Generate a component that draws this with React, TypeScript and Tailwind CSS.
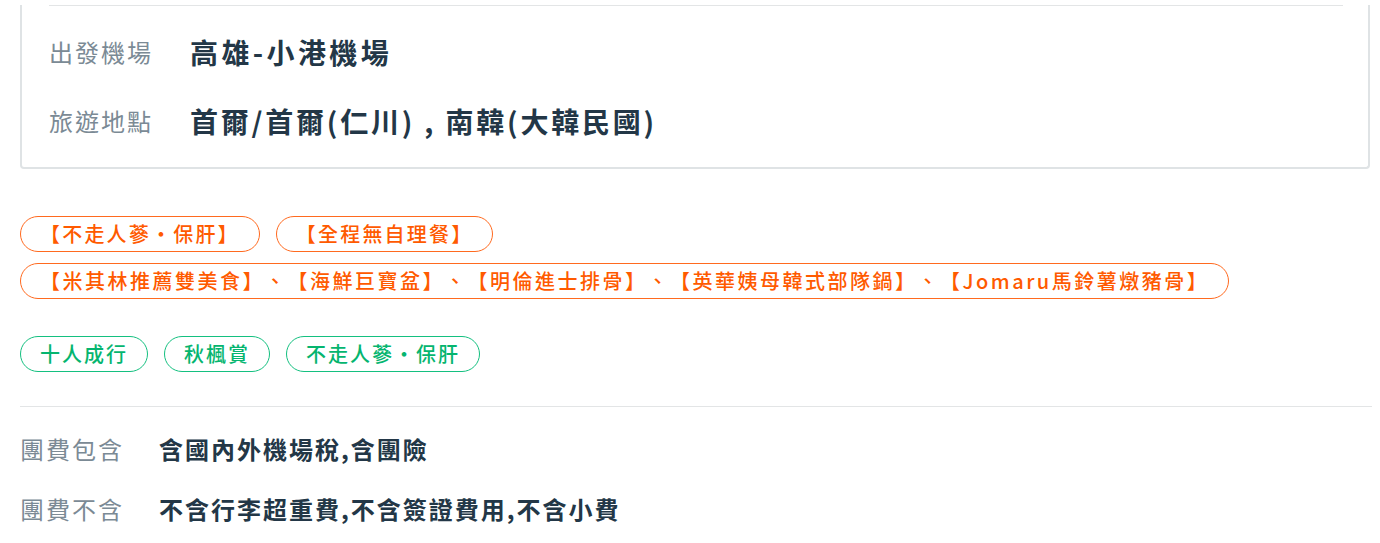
import React from "react";

const orangeTags = [
  { t: "【不走人蔘・保肝】", cls: "tracking-[2.2px]" },
  { t: "【全程無自理餐】", cls: "tracking-[2.2px]" },
  {
    t: "【米其林推薦雙美食】、【海鮮巨寶盆】、【明倫進士排骨】、【英華姨母韓式部隊鍋】、【Jomaru馬鈴薯燉豬骨】",
    cls: "tracking-[2.5px]",
  },
];

const greenTags = ["十人成行", "秋楓賞", "不走人蔘・保肝"];

export default function App() {
  return (
    <div className="bg-white w-[1380px] h-[543px] overflow-hidden font-['Noto_Sans_CJK_TC','Noto_Sans',sans-serif] [text-spacing-trim:space-all]">
      <div className="ml-[20px] w-[1352px]">
        {/* Card */}
        <div className="w-[1350px] border-x-2 border-b-2 border-[#dfe3e5] rounded-b-[4px] pl-[27px] pr-[25px] pb-[12px]">
          <div className="mt-[5px] h-px bg-[#e3e5e6]" />
          <div className="pt-[11px]">
            <div className="flex items-center h-[69px]">
              <div className="w-[141px] text-[24px] tracking-[2px] text-[#7b8a95]">出發機場</div>
              <div className="text-[28px] font-bold tracking-[3.4px] text-[#233747]">高雄-小港機場</div>
            </div>
            <div className="flex items-center h-[69px]">
              <div className="w-[141px] text-[24px] tracking-[2px] text-[#7b8a95]">旅遊地點</div>
              <div className="text-[28px] font-bold tracking-[2.8px] text-[#233747]">首爾/首爾(仁川) , 南韓(大韓民國)</div>
            </div>
          </div>
        </div>

        {/* Orange tags */}
        <div className="mt-[47px] flex flex-wrap gap-x-4 gap-y-[11px]">
          {orangeTags.map(({ t, cls }) => (
            <div
              key={t}
              className={`h-9 flex items-center rounded-full border border-[#ff6a1f] px-[19px] text-[20px] font-medium text-[#ff5a00] [text-spacing-trim:space-all] ${cls}`}
            >
              {t}
            </div>
          ))}
        </div>

        {/* Green tags */}
        <div className="mt-[37px] flex flex-wrap gap-x-4">
          {greenTags.map((t) => (
            <div
              key={t}
              className="h-9 flex items-center rounded-full border border-[#14c080] px-[19px] text-[20px] font-medium tracking-[2px] text-[#05b56f]"
            >
              {t}
            </div>
          ))}
        </div>

        <div className="mt-[34px] h-px bg-[#e3e5e6]" />

        <div className="pt-[12px]">
          <div className="flex items-center h-[60px]">
            <div className="w-[139px] text-[24px] tracking-[2px] text-[#7b8a95]">團費包含</div>
            <div className="text-[24px] font-bold tracking-[2px] text-[#233747]">含國內外機場稅,含團險</div>
          </div>
          <div className="flex items-center h-[60px]">
            <div className="w-[139px] text-[24px] tracking-[2px] text-[#7b8a95]">團費不含</div>
            <div className="text-[24px] font-bold tracking-[2px] text-[#233747]">不含行李超重費,不含簽證費用,不含小費</div>
          </div>
        </div>
      </div>
    </div>
  );
}
